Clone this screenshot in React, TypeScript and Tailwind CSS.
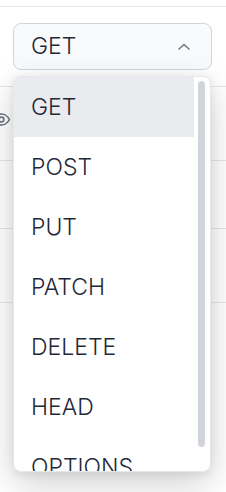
import React from "react";

const items = ["GET", "POST", "PUT", "PATCH", "DELETE", "HEAD", "OPTIONS"];

export default function App() {
  return (
    <div
      className="relative w-[226px] h-[492px] overflow-hidden bg-white"
      style={{ fontFamily: "Inter, 'Noto Sans', sans-serif" }}
    >
      {/* page behind */}
      <div className="h-[6px]" />
      <div className="h-px bg-[#e5e7eb]" />
      <div className="px-[13px] pt-[16px]">
        <div className="h-[47px] w-[199px] rounded-lg border border-[#d1d5db] bg-[#f9fafb] flex items-center justify-between pl-[17px] pr-[21px]">
          <span className="text-[23px] font-light text-[#1f2937] leading-none">GET</span>
          <svg width="12" height="7" viewBox="0 0 12 7" fill="none">
            <path d="M1 6L6 1.5L11 6" stroke="#6b7280" strokeWidth="1.5" strokeLinecap="round" strokeLinejoin="round" />
          </svg>
        </div>
      </div>
      <div className="h-[16px]" />
      <div className="h-px bg-[#e5e7eb]" />
      <div className="relative h-[73px]">
        <svg className="absolute left-[-8px] top-[23px]" width="19" height="19" viewBox="0 0 24 24" fill="none" stroke="#6b7280" strokeWidth="2" strokeLinecap="round" strokeLinejoin="round">
          <path d="M2 12s3.5-7 10-7 10 7 10 7-3.5 7-10 7S2 12 2 12z" />
          <circle cx="12" cy="12" r="3" />
        </svg>
      </div>
      <div className="h-px bg-[#e5e7eb]" />
      <div className="h-[67px]" />
      <div className="h-px bg-[#e5e7eb]" />
      <div className="h-[73px]" />
      <div className="h-px bg-[#e5e7eb]" />

      {/* dropdown menu */}
      <div className="absolute left-[13px] top-[76px] w-[198px] h-[396px] rounded-lg border border-[#e5e7eb] bg-white shadow-[0_12px_36px_rgba(0,0,0,0.18),0_2px_10px_rgba(0,0,0,0.08)] overflow-hidden flex">
        <div className="w-[180px] flex flex-col">
          {items.map((it, i) => (
            <div
              key={it}
              className={`h-[60px] shrink-0 flex items-center pl-[17px] text-[23px] font-light leading-none text-[#1f2937] ${i === 0 ? "bg-[#e9ebef]" : ""}`}
            >
              {it}
            </div>
          ))}
        </div>
        <div className="pl-[4px] pt-[4px]">
          <div className="w-[7px] h-[366px] rounded-full bg-[#d1d5db]" />
        </div>
      </div>
    </div>
  );
}
